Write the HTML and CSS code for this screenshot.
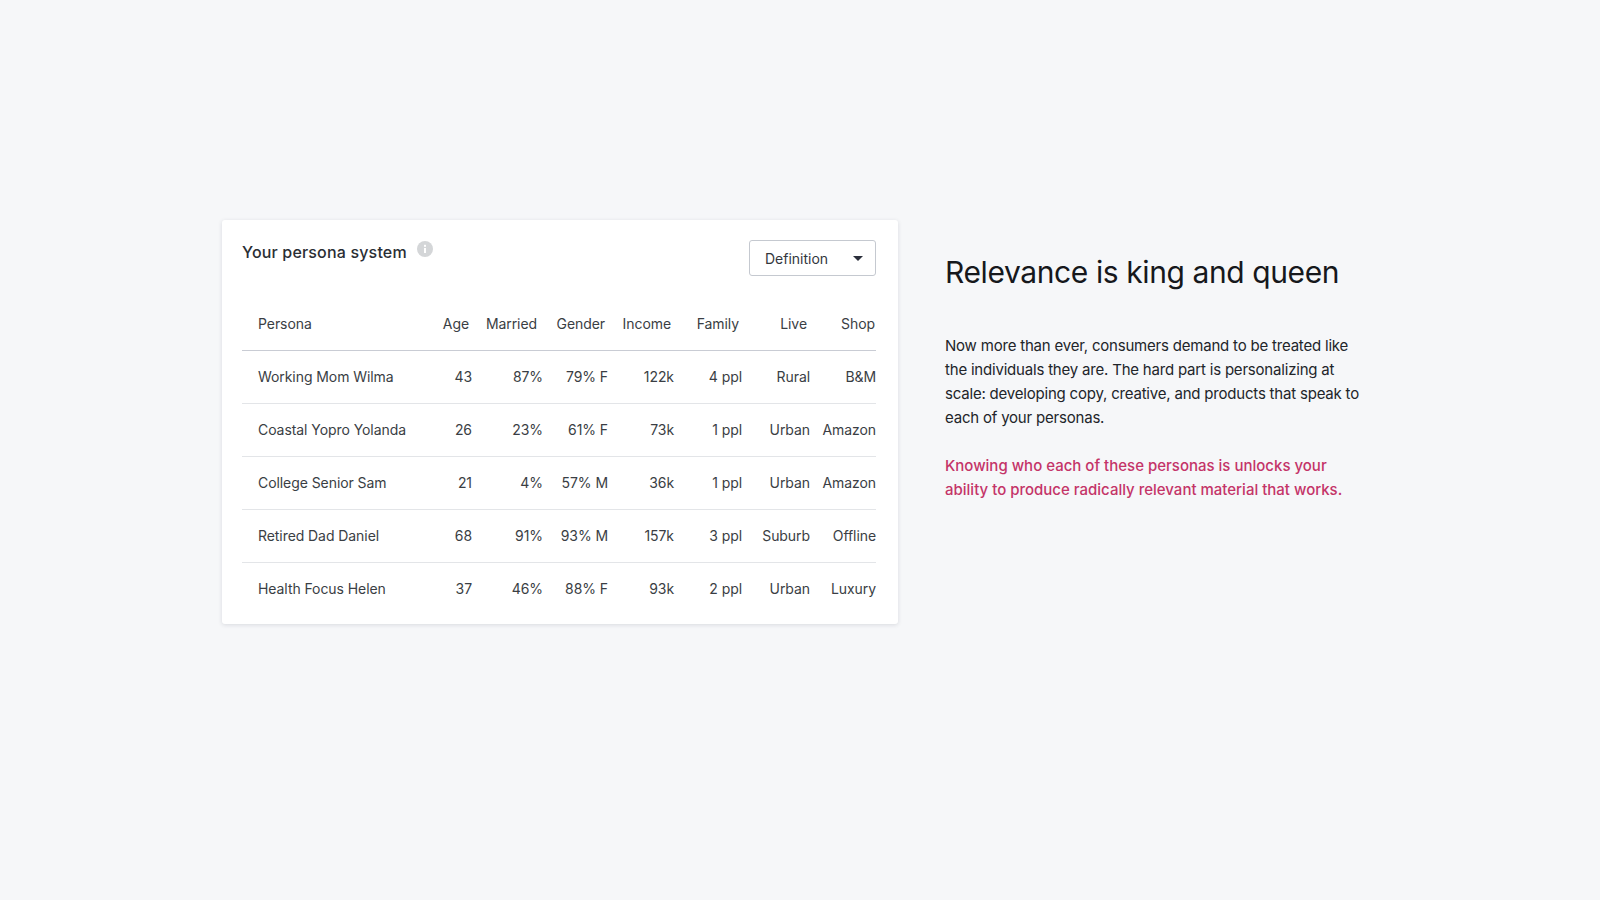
FILE: index.html
```html
<!DOCTYPE html>
<html lang="en">
<head>
<meta charset="utf-8">
<title>Relevance is king and queen</title>
<link rel="stylesheet" href="styles.css">
</head>
<body>
<main class="page">
  <section class="card">
    <div class="card-head">
      <div class="title-wrap">
        <h2 class="card-title">Your persona system</h2>
        <svg class="info" width="16" height="16" viewBox="0 0 16 16" aria-hidden="true">
          <circle cx="8" cy="8" r="8" fill="#d4d6d8"/>
          <rect x="7" y="7" width="2" height="5" fill="#fff"/>
          <rect x="7" y="3.8" width="2" height="2" fill="#fff"/>
        </svg>
      </div>
      <div class="select">
        <span>Definition</span>
        <span class="caret"></span>
      </div>
    </div>
    <table class="table">
      <colgroup>
        <col class="c-persona"><col class="c-age"><col class="c-married"><col class="c-gender"><col class="c-income"><col class="c-family"><col class="c-live"><col class="c-shop">
      </colgroup>
      <thead>
        <tr>
          <th class="name">Persona</th>
          <th class="h-age">Age</th>
          <th class="h-married">Married</th>
          <th class="h-gender">Gender</th>
          <th class="h-income">Income</th>
          <th class="h-family">Family</th>
          <th class="h-live">Live</th>
          <th class="h-shop">Shop</th>
        </tr>
      </thead>
      <tbody>
        <tr><td class="name">Working Mom Wilma</td><td>43</td><td>87%</td><td>79% F</td><td>122k</td><td>4 ppl</td><td>Rural</td><td>B&amp;M</td></tr>
        <tr><td class="name">Coastal Yopro Yolanda</td><td>26</td><td>23%</td><td>61% F</td><td>73k</td><td>1 ppl</td><td>Urban</td><td>Amazon</td></tr>
        <tr><td class="name">College Senior Sam</td><td>21</td><td>4%</td><td>57% M</td><td>36k</td><td>1 ppl</td><td>Urban</td><td>Amazon</td></tr>
        <tr><td class="name">Retired Dad Daniel</td><td>68</td><td>91%</td><td>93% M</td><td>157k</td><td>3 ppl</td><td>Suburb</td><td>Offline</td></tr>
        <tr><td class="name">Health Focus Helen</td><td>37</td><td>46%</td><td>88% F</td><td>93k</td><td>2 ppl</td><td>Urban</td><td>Luxury</td></tr>
      </tbody>
    </table>
  </section>
  <section class="copy">
    <h1 class="headline">Relevance is king and queen</h1>
    <p class="body-text">Now more than ever, consumers demand to be treated like the individuals they are. The hard part is personalizing at scale: developing copy, creative, and products that speak to each of your personas.</p>
    <p class="body-text accent">Knowing who each of these personas is unlocks your ability to produce radically relevant material that works.</p>
  </section>
</main>
</body>
</html>
```

FILE: styles.css
```css
* { box-sizing: border-box; }
html, body { margin: 0; height: 100%; }
body {
  background: #f6f7f9;
  font-family: Inter, "Liberation Sans", sans-serif;
  overflow: hidden;
}
.page {
  display: flex;
  align-items: flex-start;
  gap: 47px;
  padding: 220px 0 0 222px;
}
.card {
  width: 676px;
  height: 404px;
  flex: none;
  background: #fff;
  border-radius: 3px;
  box-shadow: 0 1px 4px rgba(40, 50, 70, 0.14);
  padding: 20px 22px 0 20px;
}
.card-head {
  display: flex;
  justify-content: space-between;
  align-items: flex-start;
  height: 58px;
}
.title-wrap {
  display: flex;
  align-items: flex-start;
  gap: 10px;
  padding-top: 2px;
}
.card-title {
  margin: 0;
  font-size: 16px;
  line-height: 20px;
  font-weight: 500;
  letter-spacing: 0.17px;
  color: #2a2e34;
}
.info { margin-top: -1px; }
.select {
  width: 127px;
  height: 36px;
  border: 1px solid #c5c9d0;
  border-radius: 3px;
  display: flex;
  align-items: center;
  justify-content: space-between;
  padding: 0 12px 0 15px;
  font-size: 14px;
  color: #33373d;
}
.caret {
  width: 0;
  height: 0;
  border-left: 5px solid transparent;
  border-right: 5px solid transparent;
  border-top: 5px solid #2b2f3b;
}
.table {
  width: 634px;
  border-collapse: collapse;
  table-layout: fixed;
  font-size: 14px;
  letter-spacing: -0.07px;
  color: #3a3e44;
}
.c-persona { width: 160px; }
.c-age { width: 70px; }
.c-married { width: 71px; }
.c-gender { width: 65px; }
.c-income { width: 66px; }
.c-family { width: 68px; }
.c-live { width: 68px; }
.c-shop { width: 66px; }
th, td {
  height: 53px;
  padding: 0;
  text-align: right;
  font-weight: 400;
  white-space: nowrap;
}
thead th { height: 52px; border-bottom: 1px solid #c9ccd4; }
tbody td { border-bottom: 1px solid #e3e5e8; }
tbody tr:last-child td { border-bottom: 0; }
.table .name { text-align: left; padding-left: 16px; }
.h-age { padding-right: 3px; }
.h-married { padding-right: 6px; }
.h-gender { padding-right: 3px; }
.h-income { padding-right: 3px; }
.h-family { padding-right: 3px; }
.h-live { padding-right: 3px; }
.h-shop { padding-right: 1px; }
.copy { width: 420px; padding-top: 32px; }
.headline {
  margin: 0 0 42px;
  font-size: 30px;
  line-height: 40px;
  font-weight: 400;
  letter-spacing: -0.4px;
  color: #16181c;
}
.body-text {
  margin: 0 0 24px;
  font-size: 15px;
  line-height: 24px;
  letter-spacing: -0.2px;
  color: #22252a;
}
.accent { color: #c43468; font-weight: 500; letter-spacing: 0; }
```
